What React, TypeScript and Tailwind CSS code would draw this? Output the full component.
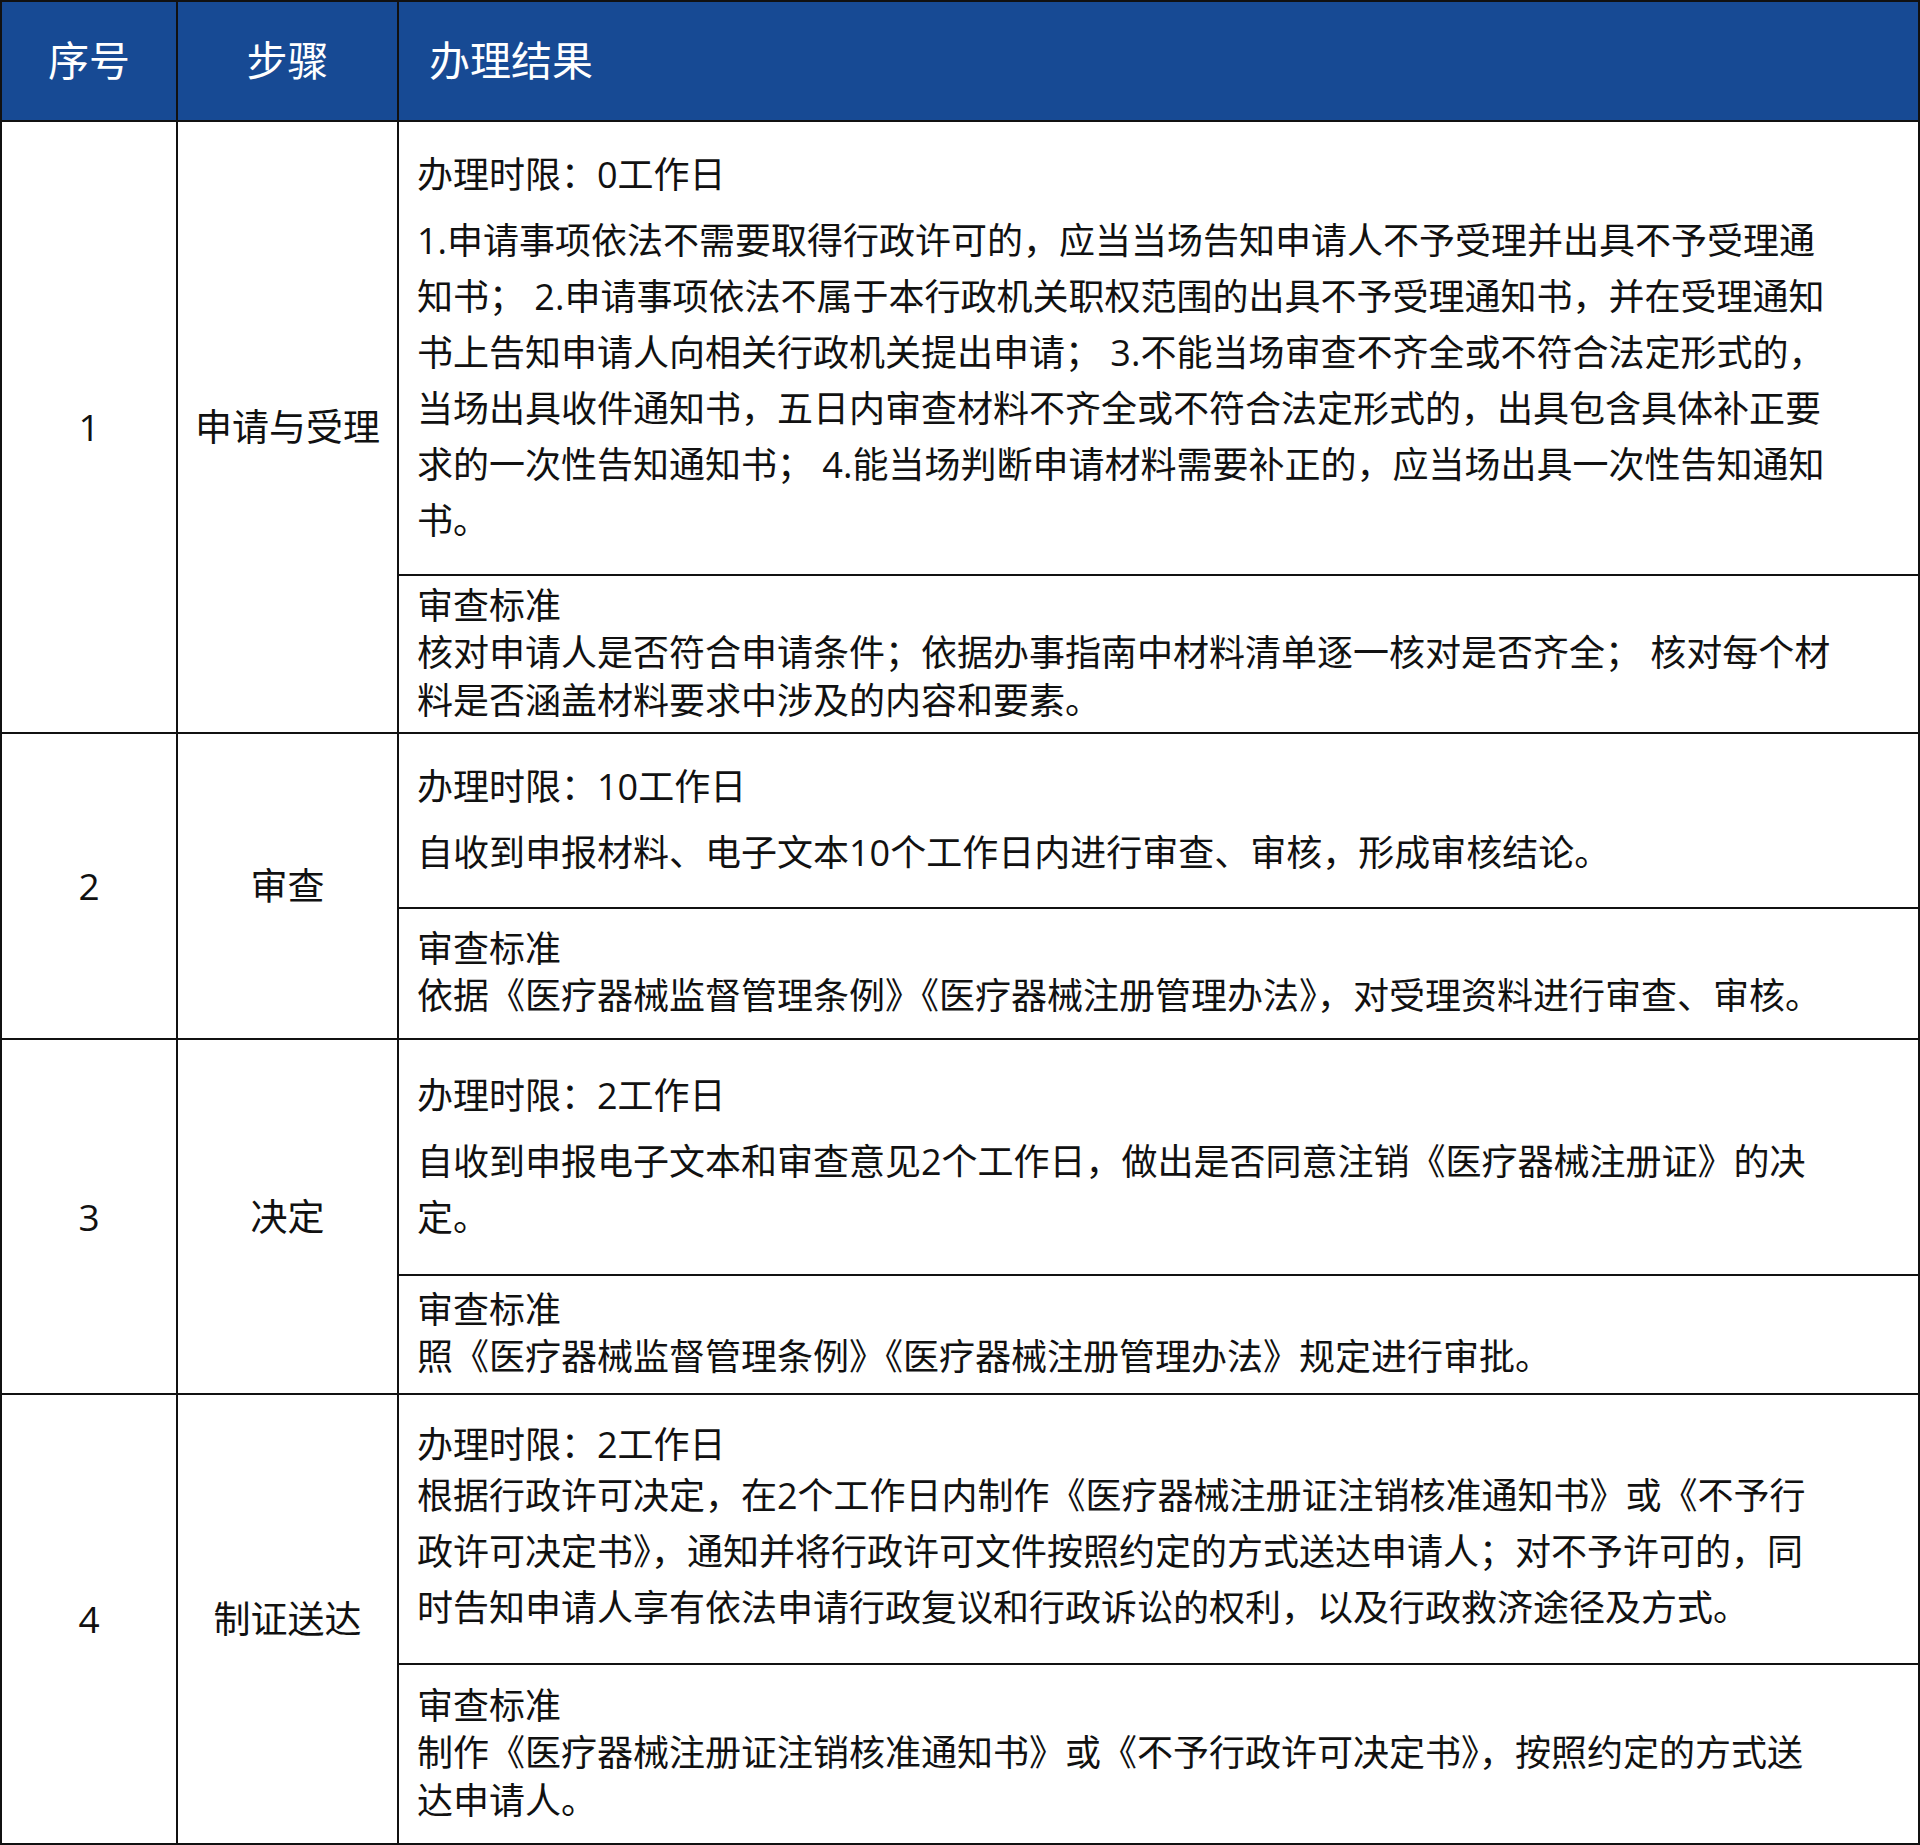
import React from "react";

const font = { fontFamily: '"Open Sans","Noto Sans CJK SC",sans-serif' };

type Sub = { title: string; lines: string[]; h: number; kind: "a" | "b" | "c" };
type Row = { n: string; step: string; h: number; subs: Sub[] };

const rows: Row[] = [
  {
    n: "1", step: "申请与受理", h: 612,
    subs: [
      { kind: "a", h: 453, title: "办理时限：0工作日", lines: [
        "1.申请事项依法不需要取得行政许可的，应当当场告知申请人不予受理并出具不予受理通",
        "知书； 2.申请事项依法不属于本行政机关职权范围的出具不予受理通知书，并在受理通知",
        "书上告知申请人向相关行政机关提出申请； 3.不能当场审查不齐全或不符合法定形式的，",
        "当场出具收件通知书，五日内审查材料不齐全或不符合法定形式的，出具包含具体补正要",
        "求的一次性告知通知书； 4.能当场判断申请材料需要补正的，应当场出具一次性告知通知",
        "书。"] },
      { kind: "b", h: 159, title: "审查标准", lines: [
        "核对申请人是否符合申请条件；依据办事指南中材料清单逐一核对是否齐全； 核对每个材",
        "料是否涵盖材料要求中涉及的内容和要素。"] },
    ],
  },
  {
    n: "2", step: "审查", h: 306,
    subs: [
      { kind: "a", h: 174, title: "办理时限：10工作日", lines: ["自收到申报材料、电子文本10个工作日内进行审查、审核，形成审核结论。"] },
      { kind: "b", h: 132, title: "审查标准", lines: ["依据《医疗器械监督管理条例》《医疗器械注册管理办法》，对受理资料进行审查、审核。"] },
    ],
  },
  {
    n: "3", step: "决定", h: 355,
    subs: [
      { kind: "a", h: 235, title: "办理时限：2工作日", lines: [
        "自收到申报电子文本和审查意见2个工作日，做出是否同意注销《医疗器械注册证》的决",
        "定。"] },
      { kind: "b", h: 120, title: "审查标准", lines: ["照《医疗器械监督管理条例》《医疗器械注册管理办法》规定进行审批。"] },
    ],
  },
  {
    n: "4", step: "制证送达", h: 450,
    subs: [
      { kind: "c", h: 269, title: "办理时限：2工作日", lines: [
        "根据行政许可决定，在2个工作日内制作《医疗器械注册证注销核准通知书》或《不予行",
        "政许可决定书》，通知并将行政许可文件按照约定的方式送达申请人；对不予许可的，同",
        "时告知申请人享有依法申请行政复议和行政诉讼的权利，以及行政救济途径及方式。"] },
      { kind: "b", h: 181, title: "审查标准", lines: [
        "制作《医疗器械注册证注销核准通知书》或《不予行政许可决定书》，按照约定的方式送",
        "达申请人。"] },
    ],
  },
];

export default function App() {
  return (
    <div className="w-[1920px] h-[1845px] bg-white text-[#111] overflow-hidden" style={font}>
      <div className="border-2 border-[#111] w-[1920px]">
        <div className="flex h-[118px] bg-[#174a94] text-white text-[41px]">
          <div className="w-[176px] flex items-center justify-center border-r-2 border-[#111]">序号</div>
          <div className="w-[221px] flex items-center justify-center border-r-2 border-[#111]">步骤</div>
          <div className="flex-1 flex items-center pl-[30px]">办理结果</div>
        </div>
        {rows.map((r) => (
          <div key={r.n} className="flex border-t-2 border-[#111]" style={{ height: r.h }}>
            <div className="w-[176px] flex items-center justify-center border-r-2 border-[#111] text-[37px]">{r.n}</div>
            <div className="w-[221px] flex items-center justify-center border-r-2 border-[#111] text-[37px]">{r.step}</div>
            <div className="flex-1 flex flex-col min-w-0">
              {r.subs.map((s, i) => (
                <div
                  key={i}
                  className={`flex flex-col justify-center pl-[18px] text-[36px] whitespace-nowrap ${i > 0 ? "border-t-2 border-[#111]" : ""}`}
                  style={{ height: s.h }}
                >
                  {s.kind === "b" ? (
                    <>
                      <div className="leading-[46px]">{s.title}</div>
                      {s.lines.map((l, j) => <div key={j} className="leading-[48px]">{l}</div>)}
                    </>
                  ) : s.kind === "a" ? (
                    <>
                      <div className="leading-[56px] mb-[10px]">{s.title}</div>
                      {s.lines.map((l, j) => <div key={j} className="leading-[56px]">{l}</div>)}
                    </>
                  ) : (
                    <>
                      <div className="leading-[47px]">{s.title}</div>
                      {s.lines.map((l, j) => <div key={j} className="leading-[56px]">{l}</div>)}
                    </>
                  )}
                </div>
              ))}
            </div>
          </div>
        ))}
      </div>
    </div>
  );
}
